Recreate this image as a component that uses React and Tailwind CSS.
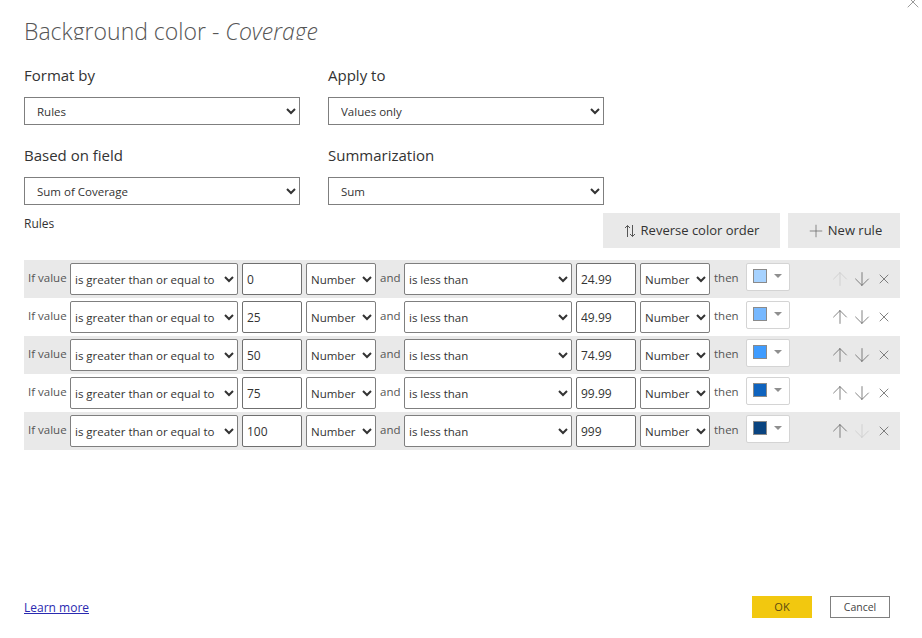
import { ArrowUp, ArrowDown, X, Plus } from "lucide-react";

const rules = [
  { from: "0", to: "24.99", color: "bg-[#a6d2ff]", upOff: true },
  { from: "25", to: "49.99", color: "bg-[#76b8ff]" },
  { from: "50", to: "74.99", color: "bg-[#3f9cff]" },
  { from: "75", to: "99.99", color: "bg-[#0f63be]" },
  { from: "100", to: "999", color: "bg-[#0a4480]", downOff: true },
];

function Dropdown({ value, className }) {
  return (
    <select
      defaultValue={value}
      className={`bg-white border border-[#7f7f7f] text-[#333] ${className}`}
    >
      <option>{value}</option>
    </select>
  );
}

function Field({ label, value }) {
  return (
    <div className="flex flex-col">
      <label className="text-[15px] leading-[20px] text-[#333]">{label}</label>
      <Dropdown
        value={value}
        className="mt-[12px] h-[28px] w-[276px] pl-[8px] text-[11.5px]"
      />
    </div>
  );
}

function RuleRow({ rule, shaded }) {
  const ctl = "h-[32px] rounded-[2px] border-[#6f6f6f]";
  const sel = `${ctl} pl-0 text-[11.5px]`;
  const num = `${ctl} ml-[4px] w-[60px] border bg-white pl-[4px] pt-[1px] text-[12px] text-[#333]`;
  const label = "pt-[7px] leading-[16px]";
  return (
    <div
      className={`flex h-[38px] items-start pl-[4px] pt-[3px] text-[11.5px] text-[#555] ${
        shaded ? "bg-[#e9e9e9]" : "bg-white"
      }`}
    >
      <span className={`w-[42px] ${label}`}>If value</span>
      <Dropdown value="is greater than or equal to" className={`${sel} w-[168px]`} />
      <input readOnly value={rule.from} className={num} />
      <Dropdown value="Number" className={`${sel} ml-[4px] w-[70px]`} />
      <span className={`w-[28px] pl-[4px] ${label}`}>and</span>
      <Dropdown value="is less than" className={`${sel} w-[168px]`} />
      <input readOnly value={rule.to} className={num} />
      <Dropdown value="Number" className={`${sel} ml-[4px] w-[70px]`} />
      <span className={`w-[36px] pl-[4px] ${label}`}>then</span>
      <button className="flex h-[28px] w-[44px] items-start rounded-[2px] border border-[#d4d4d4] bg-white pl-[6px] pt-[5px]">
        <span className={`h-[14px] w-[14px] border border-[#8a8a8a] ${rule.color}`} />
        <span className="ml-[7px] mt-[5px] h-0 w-0 border-x-[4px] border-t-[4px] border-x-transparent border-t-[#8f8f8f]" />
      </button>
      <div className="ml-[39px] flex items-center pt-[5px]">
        <ArrowUp size={22} strokeWidth={0.8} className={rule.upOff ? "text-[#c8c8c8]" : "text-[#555]"} />
        <ArrowDown size={22} strokeWidth={0.8} className={rule.downOff ? "text-[#c8c8c8]" : "text-[#555]"} />
        <span className="flex w-[22px] justify-center">
          <X size={16} strokeWidth={1.1} className="text-[#555]" />
        </span>
      </div>
    </div>
  );
}

export default function App() {
  return (
    <div className="relative flex h-[638px] w-[922px] flex-col overflow-hidden bg-white pl-[24px] pr-[22px] font-['Open_Sans','Noto_Sans',sans-serif] text-[#333]">
      <X size={20} strokeWidth={0.9} className="absolute right-[-1px] top-[-8px] text-[#777]" />

      {/* Title, clipped at the bottom like the original */}
      <div className="mt-[18px] h-[22px] overflow-hidden text-[23px] font-light leading-[26px] text-[#555]">
        Background color - <i>Coverage</i>
      </div>

      <div className="mt-[25px] flex gap-[28px]">
        <Field label="Format by" value="Rules" />
        <Field label="Apply to" value="Values only" />
      </div>
      <div className="mt-[20px] flex gap-[28px]">
        <Field label="Based on field" value="Sum of Coverage" />
        <Field label="Summarization" value="Sum" />
      </div>

      <div className="mt-[8px] flex h-[35px] justify-between">
        <span className="mt-[3px] text-[12px] leading-[16px]">Rules</span>
        <div className="flex gap-[8px]">
          <button className="flex w-[177px] items-center justify-center gap-[5px] bg-[#e9e9e9] text-[13px] text-[#333]">
            <svg width="12" height="14" viewBox="0 0 12 14" fill="none" stroke="#555" strokeWidth="1">
              <path d="M3.5 13V1.5M1 4l2.5-2.5L6 4M8.5 1v11.5M6 10l2.5 2.5L11 10" />
            </svg>
            Reverse color order
          </button>
          <button className="flex w-[112px] items-center justify-center gap-[2px] bg-[#e9e9e9] text-[13px] text-[#333]">
            <Plus size={20} strokeWidth={0.9} className="text-[#666]" />
            New rule
          </button>
        </div>
      </div>

      <div className="mt-[12px]">
        {rules.map((r, i) => (
          <RuleRow key={r.from} rule={r} shaded={i % 2 === 0} />
        ))}
      </div>

      <div className="mb-[20px] mt-auto flex items-center pr-[10px]">
        <a href="#" className="pt-[1px] text-[12px] text-[#2a2ab0] underline">
          Learn more
        </a>
        <div className="ml-auto flex gap-[18px]">
          <button className="h-[22px] w-[60px] bg-[#f2c80f] text-[11px] text-[#5a4a10]">OK</button>
          <button className="h-[22px] w-[60px] border border-[#7f7f7f] bg-white pt-[1px] text-[10.5px] text-[#444]">Cancel</button>
        </div>
      </div>
    </div>
  );
}
